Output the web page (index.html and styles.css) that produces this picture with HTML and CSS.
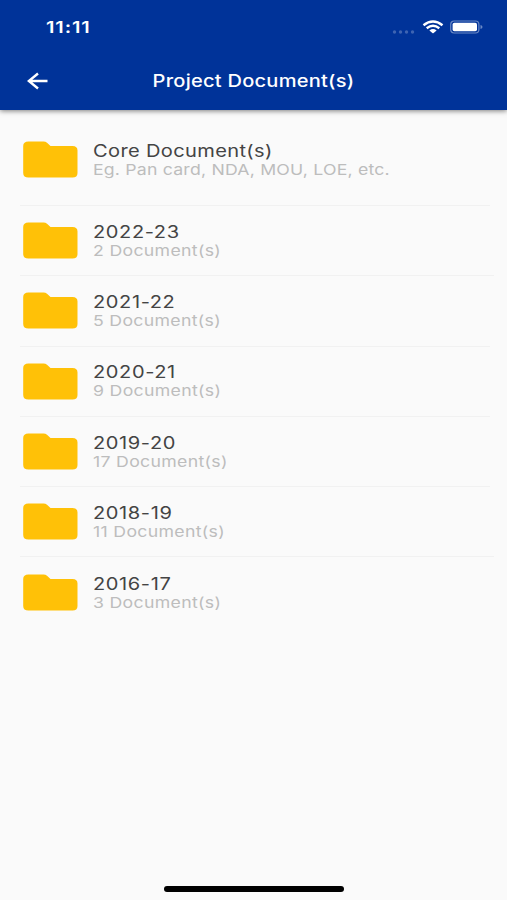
FILE: index.html
```
<!DOCTYPE html>
<html lang="en">
<head>
	<meta charset="UTF-8">
	<meta name="viewport" content="width=device-width,initial-scale=1" />
	<title>Project Document(s)</title>
	<link rel="stylesheet" href="styles.css">
</head>
<body>
	<!-- folder shape shared by all rows -->
	<svg class="defs" width="0" height="0">
		<symbol id="folder" viewBox="0 0 55 37" preserveAspectRatio="none">
			<path d="M5.500 0.500H20.500Q22.500 0.500 24 1.800L27.500 5H49.500Q54.500 5 54.500 9.500V32Q54.500 36.500 49.500 36.500H5.500Q0.200 36.500 0.200 32V5Q0.200 0.500 5.500 0.500Z" />
		</symbol>
	</svg>

	<div class="screen">
		<header class="header">
			<div class="status">
				<span class="time">11:11</span>
				<div class="signals">
					<svg class="dots" width="24" height="4" viewBox="0 0 24 4">
						<circle cx="2.500" cy="2" r="1.700" />
						<circle cx="8.500" cy="2" r="1.700" />
						<circle cx="14.500" cy="2" r="1.700" />
						<circle cx="20.500" cy="2" r="1.700" />
					</svg>
					<svg class="wifi" width="22" height="14" viewBox="0 0 22 14">
						<path d="M1.500 5.200Q11 -2.200 20.500 5.200M4.700 8.200Q11 3.300 17.300 8.200" />
						<path class="fill" d="M7.400 10.400Q11 7.600 14.600 10.400L11.600 13Q11 13.500 10.400 13Z" />
					</svg>
					<svg class="battery" width="33" height="14" viewBox="0 0 33 14">
						<rect class="frame" x="0.700" y="1" width="28.200" height="12" rx="3.500" />
						<rect class="level" x="2.600" y="2.700" width="24.400" height="8.600" rx="1.800" />
						<path class="cap" d="M30.500 5Q32.500 5.500 32.500 7T30.500 9Z" />
					</svg>
				</div>
			</div>
			<div class="nav">
				<svg class="back" width="22" height="18" viewBox="0 0 22 18">
					<path d="M20.500 9H2M11 1.500L1.800 9L11 16.500" />
				</svg>
				<h1 class="title"><span>Project Document(s)</span></h1>
			</div>
		</header>

		<ul class="list">
			<li class="core">
				<svg class="folder"><use href="#folder" /></svg>
				<div class="text">
					<p class="name">Core Document(s)</p>
					<p class="info">Eg. Pan card, NDA, MOU, LOE, etc.</p>
				</div>
			</li>
			<li class="wide">
				<svg class="folder"><use href="#folder" /></svg>
				<div class="text">
					<p class="name">2022-23</p>
					<p class="info">2 Document(s)</p>
				</div>
			</li>
			<li>
				<svg class="folder"><use href="#folder" /></svg>
				<div class="text">
					<p class="name">2021-22</p>
					<p class="info">5 Document(s)</p>
				</div>
			</li>
			<li>
				<svg class="folder"><use href="#folder" /></svg>
				<div class="text">
					<p class="name">2020-21</p>
					<p class="info">9 Document(s)</p>
				</div>
			</li>
			<li>
				<svg class="folder"><use href="#folder" /></svg>
				<div class="text">
					<p class="name">2019-20</p>
					<p class="info">17 Document(s)</p>
				</div>
			</li>
			<li class="wide">
				<svg class="folder"><use href="#folder" /></svg>
				<div class="text">
					<p class="name">2018-19</p>
					<p class="info">11 Document(s)</p>
				</div>
			</li>
			<li>
				<svg class="folder"><use href="#folder" /></svg>
				<div class="text">
					<p class="name">2016-17</p>
					<p class="info">3 Document(s)</p>
				</div>
			</li>
		</ul>

		<div class="home"></div>
	</div>
</body>
</html>
```
FILE: styles.css
```
* {
	padding: 0;
	margin: 0;
	box-sizing: border-box;
}

body {
	font-family: Inter, "Liberation Sans", sans-serif;
	background: #fafafa;
}

li {
	list-style: none;
}

svg {
	display: block;
	flex: none;
}

.defs {
	display: none;
}

.screen {
	height: 900px;
	display: flex;
	flex-direction: column;
	overflow: hidden;
}

.header {
	height: 110px;
	background: #003399;
	color: #fff;
	box-shadow: 0 1px 5px rgba(0, 0, 0, 0.5);
}

/* status bar */
.status {
	height: 54px;
	padding: 0 24px 0 46px;
	display: flex;
	justify-content: space-between;
	align-items: center;
}

.time {
	font-size: 16px;
	font-weight: 600;
	letter-spacing: 0.7px;
	transform: scaleX(1.25);
	transform-origin: left;
}

.signals {
	display: flex;
	align-items: center;
}

.dots {
	margin: 9px 6px 0 0;
	fill: #3e64b2;
}

.wifi {
	margin-right: 6px;
	fill: none;
	stroke: #fff;
	stroke-width: 2.4;
}

.wifi .fill {
	fill: #fff;
	stroke: none;
}

.frame {
	fill: none;
	stroke: #6b89c5;
	stroke-width: 1.2;
}

.level {
	fill: #fff;
}

.cap {
	fill: #6b89c5;
}

/* title bar */
.nav {
	height: 54px;
	padding: 0 27px;
	display: flex;
	align-items: center;
}

.back {
	fill: none;
	stroke: #fff;
	stroke-width: 2.4;
}

.title {
	flex: 1;
	margin-right: 22px;
	font-size: 17px;
	line-height: 20px;
	font-weight: 450;
	text-align: center;
}

.title span {
	display: inline-block;
	letter-spacing: 0.2px;
	transform: scaleX(1.18);
}

/* folders */
.list {
	flex: 1;
	padding: 0 17px 0 20px;
}

.list li {
	height: 70.300px;
	padding-left: 3px;
	display: flex;
	align-items: center;
	border-bottom: 1px solid #f1f1f1;
}

.list .core {
	height: 96px;
	padding-top: 3px;
}

.list .core .text {
	padding-top: 2px;
}

.list .wide {
	margin-right: -4px;
}

.list li:last-child {
	border-bottom: none;
}

.folder {
	width: 55px;
	height: 37px;
	margin-right: 15px;
	fill: #ffc107;
}

.text {
	white-space: nowrap;
	transform: scaleX(1.18);
	transform-origin: left;
}

.name {
	font-size: 17px;
	line-height: 20px;
	letter-spacing: 0.5px;
	color: #444;
}

.info {
	font-size: 15px;
	line-height: 18px;
	letter-spacing: 0.26px;
	color: #bdbdbd;
}

.core .name {
	letter-spacing: 0.3px;
}

.core .info {
	letter-spacing: 0.16px;
}

/* home indicator */
.home {
	width: 180px;
	height: 6px;
	margin: 0 auto 8px;
	border-radius: 3px;
	background: #000;
}
```
